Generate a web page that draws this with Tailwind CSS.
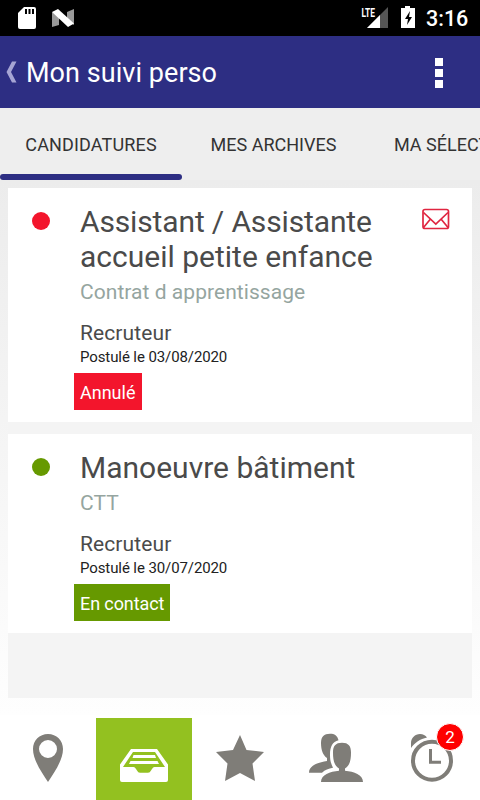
<!DOCTYPE html>
<html lang="fr">

<head>
  <meta charset="UTF-8">
  <meta name="viewport" content="width=device-width, initial-scale=1.0">
  <title>Mon suivi perso</title>
  <script src="https://cdn.jsdelivr.net/npm/@tailwindcss/browser@4"></script>
</head>

<body class="w-[480px] h-[800px] overflow-hidden flex flex-col bg-white font-['Roboto',sans-serif] text-[#4a4a4a]">

  <!-- Status bar -->
  <div class="h-9 shrink-0 bg-black flex items-center justify-between">
    <svg class="w-20 h-9" viewBox="0 0 80 36">
      <path fill="#fff" d="M24 7h10a2 2 0 0 1 2 2v18a2 2 0 0 1-2 2H20a2 2 0 0 1-2-2V13z" />
      <path fill="#000" d="M25 9h2v5h-2zM28.500 9h2v5h-2zM32 9h2v5h-2z" />
      <path fill="#999" d="M52 12l7 4v9l-7 2zM67 12l7-3v16l-7-4z" />
      <path fill="#fff" d="M52 12l6-3 16 14.500-6 3.500z" />
    </svg>
    <div class="flex">
      <svg class="w-[66px] h-9" viewBox="0 0 66 36">
        <path fill="#555" d="M28 7v21H7z" />
        <path fill="#fff" d="M20 15v13H7z" />
        <path fill="#000" d="M0 5h15v13H0z" />
        <text x="1.500" y="16.500" fill="#fff" font-size="12.500" font-weight="700" textLength="13.500" lengthAdjust="spacingAndGlyphs">LTE</text>
        <path fill="#fff" d="M45 6h5v2h5v20H41V8h4z" />
        <path fill="#000" d="M50 11l-5 8h3l-1 6 5-8h-3z" />
      </svg>
      <span class="w-[54px] pt-px text-[21.500px] leading-9 font-medium text-white whitespace-nowrap">3:16</span>
    </div>
  </div>

  <!-- Header -->
  <header class="h-18 shrink-0 bg-[#2d2e83] flex items-center text-white">
    <svg class="w-[26px] h-18" viewBox="0 0 26 72">
      <path fill="#a6a5d4" d="M12 25.500h4.500L11 36l5.500 10.500H12L6.500 36z" />
    </svg>
    <h1 class="grow pt-0.5 text-[27px] tracking-[0.05px]">Mon suivi perso</h1>
    <button class="flex flex-col gap-[3px] mr-[37px] mt-0.5">
      <span class="block size-2 bg-white"></span>
      <span class="block size-2 bg-white"></span>
      <span class="block size-2 bg-white"></span>
    </button>
  </header>

  <!-- Tabs -->
  <nav class="h-18 shrink-0 bg-[#eeeeee] flex overflow-hidden text-[18px] leading-[74px] text-[#333] whitespace-nowrap">
    <a href="#" class="w-[182px] shrink-0 flex flex-col text-center">
      <span class="h-[66px] tracking-[0.15px]">CANDIDATURES</span>
      <span class="h-1.5 rounded-full bg-[#2d2e83]"></span>
    </a>
    <a href="#" class="w-[183px] shrink-0 text-center">MES ARCHIVES</a>
    <a href="#" class="shrink-0 pl-[29px]">MA SÉLECTION</a>
  </nav>

  <!-- Applications -->
  <main class="h-[535px] shrink-0 px-2 pt-2 bg-linear-to-b from-[#ececec] to-[#fefefe]">
    <div class="h-[510px] bg-[#f4f4f4] flex flex-col gap-3">
      <article class="h-[234px] bg-white flex pl-6 pt-4">
        <span class="size-[18px] mt-2 mr-[30px] shrink-0 rounded-full bg-[#f3152c]"></span>
        <div class="grow">
          <h2 class="text-[30px] leading-[35px]"><span class="tracking-[-0.14px]">Assistant / Assistante</span><br>accueil petite enfance</h2>
          <p class="text-[21px] leading-[37px] tracking-[0.05px] text-[#95a5a0]">Contrat d apprentissage</p>
          <p class="mt-1 text-[21px] leading-[37px] tracking-[0.1px]">Recruteur</p>
          <p class="-mt-0.5 text-[15px] leading-[14px] tracking-[-0.1px] text-[#222]">Postulé le 03/08/2020</p>
          <span class="block w-[68px] h-[37px] -ml-1.5 mt-[9px] px-1.5 bg-[#f3152c] text-[18px] leading-[40px] text-white">Annulé</span>
        </div>
        <svg class="w-7 h-[22px] mr-[22px] mt-1 shrink-0" viewBox="0 0 28 22" fill="none" stroke="#e02540" stroke-width="1.700">
          <rect x="1" y="1.500" width="25.500" height="19" rx="2" />
          <path d="M1.500 4.500l12.300 11.500L26 4.500M1.500 19.500L8.500 11M26 19.500L19 11" />
        </svg>
      </article>

      <article class="h-[199px] bg-white flex pl-6 pt-4">
        <span class="size-[18px] mt-2 mr-[30px] shrink-0 rounded-full bg-[#669900]"></span>
        <div class="grow">
          <h2 class="text-[30px] leading-[35px]">Manoeuvre bâtiment</h2>
          <p class="text-[21px] leading-[37px] tracking-[0.05px] text-[#95a5a0]">CTT</p>
          <p class="mt-1 text-[21px] leading-[37px] tracking-[0.1px]">Recruteur</p>
          <p class="-mt-0.5 text-[15px] leading-[14px] tracking-[-0.1px] text-[#222]">Postulé le 30/07/2020</p>
          <span class="block w-24 h-[37px] -ml-1.5 mt-[9px] px-1.5 bg-[#669900] text-[18px] leading-[40px] tracking-[-0.1px] whitespace-nowrap text-white">En contact</span>
        </div>
      </article>
    </div>
  </main>

  <!-- Bottom navigation -->
  <footer class="grow bg-white pt-[3px] grid grid-cols-5">
    <a href="#">
      <svg class="w-24 h-[82px]" viewBox="0 0 96 82">
        <path fill="#7f7d78" fill-rule="evenodd" d="M48 16c-8.500 0-15 6.500-15 15 0 11 9 24 15 33 6-9 15-22 15-33 0-8.500-6.500-15-15-15zm0 6a9 9 0 1 1 0 18 9 9 0 0 1 0-18z" />
      </svg>
    </a>
    <a href="#" class="bg-[#93c120]">
      <svg class="w-24 h-[82px]" viewBox="0 0 96 82">
        <path fill="#fff" fill-rule="evenodd" d="M35 31h26l11 15.500V62a2 2 0 0 1-2 2H26a2 2 0 0 1-2-2V46.500zM37 34L27 49h10.500q1.500 0 2.500 2l1 1.500q1 2.200 3 2.200h8q2 0 3-2.200l1-1.500q1-2 2.500-2H69L59 34z" />
        <path fill="#fff" d="M37.500 37h21.500l1 3H36.500zM34.500 43h27l1.500 3H33z" />
      </svg>
    </a>
    <a href="#">
      <svg class="w-24 h-[82px]" viewBox="0 0 96 82">
        <path fill="#7f7d78" d="M48 17l6.500 15L72 34 60.500 45.500 63 63l-15-8-15 8 2.500-17.500L24 34l17-2z" />
      </svg>
    </a>
    <a href="#">
      <svg class="w-24 h-[82px]" viewBox="0 0 96 82" fill="#7f7d78">
        <path d="M50.500 22.300C49.500 17.500 46.500 15.700 42 15.700c-6 0-9 2.800-9 9.300 0 7 2 12.500 6 15v3c-9 1.500-18 4.500-18 11.700h13c3-3 6.500-4 11-5-2-4-3-7-3-13 0-8 2.500-13 8.500-14.400z" />
        <path d="M54 24.700c-6.500 0-9 3.300-9 9.800 0 8 1.500 13.500 6 16v2.200C42 53.500 33 56.500 33 64h42c0-7.500-9-10.500-18-11.300v-2.200c4.500-2.500 6-8 6-16 0-6.500-2.500-9.800-9-9.800z" />
      </svg>
    </a>
    <a href="#" class="relative">
      <svg class="w-24 h-[82px]" viewBox="0 0 96 82">
        <path fill="#7f7d78" d="M27 30v-5c0-5 4-9 9-9 3 0 5.500 1.500 7 3.500-7 1.500-12 5-16 10.500z" />
        <circle cx="48" cy="42.700" r="19" fill="none" stroke="#7f7d78" stroke-width="4" />
        <path fill="none" stroke="#7f7d78" stroke-width="3" d="M46.500 31v13.300H57" />
      </svg>
      <span class="absolute left-[52px] top-[5px] size-7 rounded-full bg-[#fe0000] border border-white text-center text-[17px] leading-[27px] text-white">2</span>
    </a>
  </footer>

</body>

</html>
